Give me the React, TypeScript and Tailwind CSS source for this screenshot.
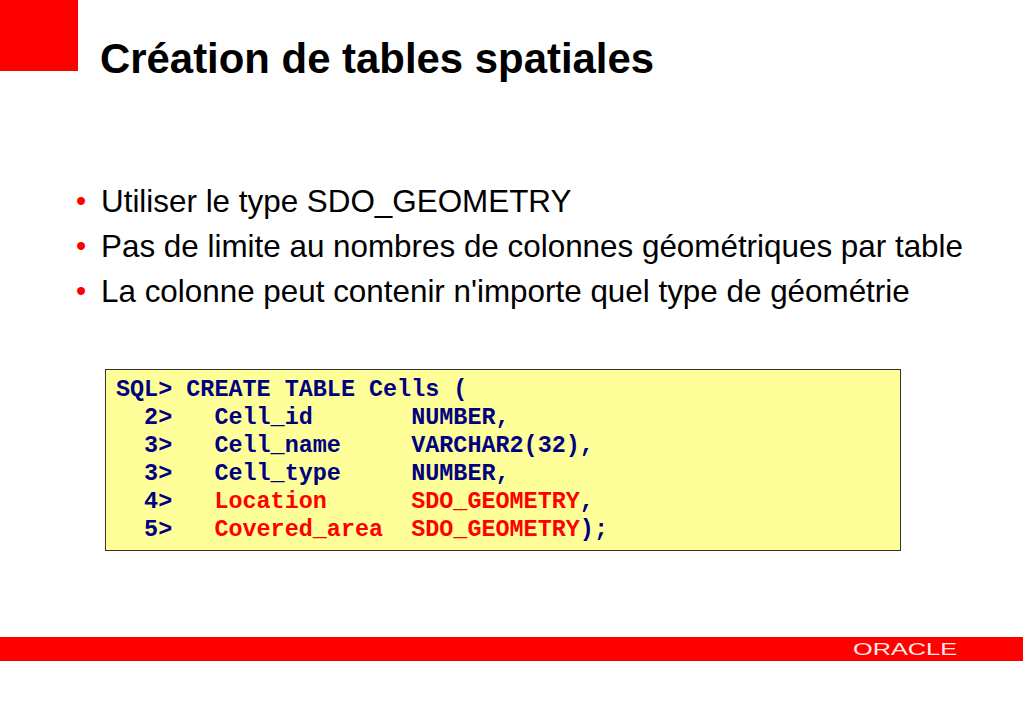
const points = [
  'Utiliser le type SDO_GEOMETRY',
  'Pas de limite au nombres de colonnes géométriques par table',
  "La colonne peut contenir n'importe quel type de géométrie",
]

export default function App() {
  return (
    <div className="flex h-[708px] w-[1023px] flex-col overflow-hidden bg-white font-['Liberation_Sans',Arial,sans-serif] text-black">
      {/* titre */}
      <header className="flex h-[71px] shrink-0">
        <div className="h-[71px] w-[78px] bg-[#ff0000]" />
        <h1 className="mt-[35px] ml-[22px] whitespace-nowrap text-[41.9px] leading-[48px] font-bold">Création de tables spatiales</h1>
      </header>

      {/* liste */}
      <ul className="mt-[108px] flex flex-col">
        {points.map((p) => (
          <li key={p} className="flex h-[45px] items-center text-[31.4px] leading-[45px]">
            <span className="ml-[76px] w-[25px] text-[29px] text-[#ff0000]">•</span>
            <span>{p}</span>
          </li>
        ))}
      </ul>

      {/* code */}
      <div className="mt-[55px] ml-[105px] h-[182px] w-[796px] border border-[#333333] bg-[#ffff99] px-[10px] py-[6px] font-['Liberation_Mono','Courier_New',monospace] text-[23.43px] leading-[28px] font-bold whitespace-pre text-[#000080]">
        <div>SQL&gt; CREATE TABLE Cells (</div>
        <div>{'  2>   Cell_id       NUMBER,'}</div>
        <div>{'  3>   Cell_name     VARCHAR2(32),'}</div>
        <div>{'  3>   Cell_type     NUMBER,'}</div>
        <div className="flex">
          <span>{'  4>   '}</span>
          <span className="text-[#ff0000]">{'Location      SDO_GEOMETRY'}</span>
          <span>,</span>
        </div>
        <div className="flex">
          <span>{'  5>   '}</span>
          <span className="text-[#ff0000]">{'Covered_area  SDO_GEOMETRY'}</span>
          <span>);</span>
        </div>
      </div>

      {/* bandeau */}
      <footer className="mt-[86px] flex h-[24px] shrink-0 items-center justify-end bg-[#ff0000] pr-[64px]">
        <svg width="106" height="20" viewBox="0 0 106 20">
          <text x="0" y="16" textLength="104" lengthAdjust="spacingAndGlyphs" fill="#ffe8e8" fontFamily="'Liberation Sans', sans-serif" fontSize="16">
            ORACLE
          </text>
        </svg>
      </footer>
    </div>
  )
}
